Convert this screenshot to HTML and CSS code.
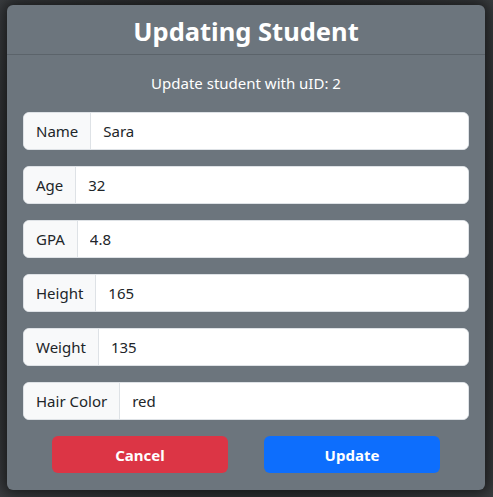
FILE: index.html
```html
<!DOCTYPE html>
<html lang="en">
<head>
<meta charset="utf-8">
<title>Updating Student</title>
<link rel="stylesheet" href="styles.css">
</head>
<body>
<div class="backdrop">
  <div class="modal">
    <div class="modal-header">
      <h2 class="modal-title">Updating Student</h2>
    </div>
    <div class="modal-body">
      <p class="subtitle">Update student with uID: 2</p>
      <div class="input-group"><span class="label">Name</span><input class="control" type="text" value="Sara"></div>
      <div class="input-group"><span class="label">Age</span><input class="control" type="text" value="32"></div>
      <div class="input-group"><span class="label">GPA</span><input class="control" type="text" value="4.8"></div>
      <div class="input-group"><span class="label">Height</span><input class="control" type="text" value="165"></div>
      <div class="input-group"><span class="label">Weight</span><input class="control" type="text" value="135"></div>
      <div class="input-group"><span class="label">Hair Color</span><input class="control" type="text" value="red"></div>
      <div class="actions">
        <button class="btn btn-cancel" type="button">Cancel</button>
        <button class="btn btn-update" type="button">Update</button>
      </div>
    </div>
  </div>
</div>
</body>
</html>
```
FILE: styles.css
```css
* { box-sizing: border-box; }
html, body { margin: 0; height: 100%; }
body {
  background: radial-gradient(ellipse at 50% 50%, #3c3e41 0%, #2e3032 70%, #3a3d40 100%);
  font-family: "Noto Sans", "Open Sans", sans-serif;
  color: #212529;
}
.backdrop {
  padding: 5px 8px 7px 7px;
}
.modal {
  width: 478px;
  background: #6c757d;
  border-radius: 6px;
  box-shadow: 0 0 14px 4px rgba(0, 0, 0, 0.55);
  color: #fff;
}
.modal-header {
  height: 50px;
  padding-top: 3px;
  display: flex;
  align-items: center;
  justify-content: center;
  border-bottom: 1px solid #5b636a;
}
.modal-title {
  margin: 0;
  font-size: 25.5px;
  font-weight: 700;
  line-height: 1.2;
}
.modal-body {
  padding: 16px 16px 17px;
}
.subtitle {
  margin: 0 0 17px;
  text-align: center;
  font-size: 15px;
  line-height: 24px;
}
.input-group {
  display: flex;
  height: 38px;
  margin-bottom: 16px;
  border-radius: 6px;
  background: #fff;
  border: 1px solid #dee2e6;
  overflow: hidden;
}
.label {
  display: flex;
  align-items: center;
  padding: 0 12px;
  background: #f8f9fa;
  border-right: 1px solid #dee2e6;
  color: #212529;
  font-size: 15px;
}
.control {
  flex: 1;
  min-width: 0;
  border: 0;
  padding: 0 12px;
  font-family: inherit;
  font-size: 15px;
  color: #212529;
  background: #fff;
  outline: none;
}
.actions {
  display: flex;
  justify-content: center;
  gap: 36px;
}
.btn {
  width: 176px;
  height: 37px;
  border: 0;
  border-radius: 6px;
  color: #fff;
  font-family: inherit;
  font-size: 15px;
  font-weight: 700;
}
.btn-cancel { background: #dc3545; }
.btn-update { background: #0d6efd; }
```
